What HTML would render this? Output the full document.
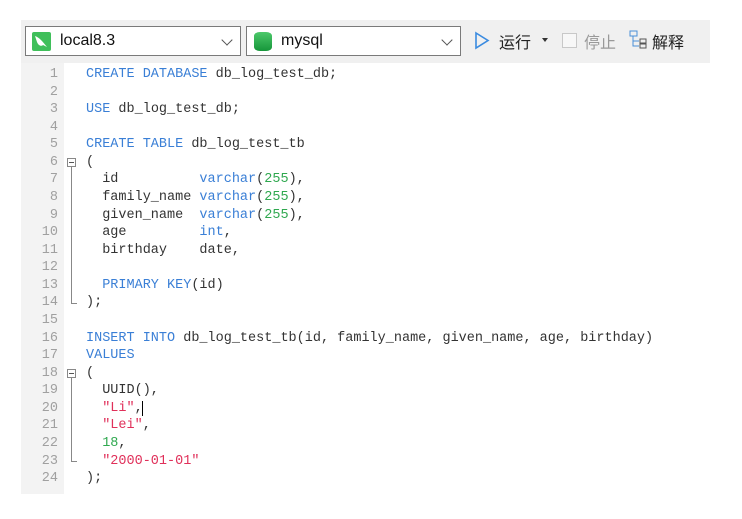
<!DOCTYPE html>
<html><head><meta charset="utf-8"><style>
body{margin:0;width:742px;height:519px;background:#fff;position:relative;overflow:hidden;font-family:"Liberation Sans","Noto Sans CJK SC",sans-serif}
.tb{position:absolute;left:21px;top:20px;width:689px;height:43px;background:#f0f0f0}
.dd{position:absolute;top:6px;height:30px;background:#fff;border:1px solid #7a7a7a;box-sizing:border-box}
.dd span{position:absolute;left:34px;top:5px;font-size:16px;color:#111}
.chev{position:absolute;right:9px;top:9px;width:7px;height:7px;border-right:1.3px solid #555;border-bottom:1.3px solid #555;transform:rotate(45deg)}
.gut{position:absolute;left:21px;top:63px;width:43px;height:431px;background:#f3f3f3}
.code{position:absolute;left:0;top:66px;font-family:"Liberation Mono",monospace;font-size:13.5px;line-height:17.57px;color:#333}
.ln{position:absolute;left:21px;width:37px;text-align:right;color:#a0a0a0;font-size:13.5px;line-height:17.57px}
.tx{position:absolute;left:86px;white-space:pre}
.k{color:#3a7fd6}.n{color:#2fa84f}.s{color:#e0305a}
.fold{position:absolute;left:67px;width:9px;height:9px;border:1px solid #888;background:#fff;box-sizing:border-box}
.fold:after{content:"";position:absolute;left:1px;top:3px;width:5px;height:1px;background:#555}
.vl{position:absolute;left:71px;width:1px;background:#888}
.tk{position:absolute;left:71px;width:6px;height:1px;background:#888}
</style></head><body>
<div class="tb">
 <div class="dd" style="left:4px;width:216px">
  <div style="position:absolute;left:6px;top:5px;width:19px;height:19px;background:#3fbf5a;border-radius:2px"><svg width="19" height="19"><path d="M3 4 C8 6 10 9 15 15 L11 13 C9 15 6 13 5 10 Z" fill="#fff"/></svg></div>
  <span>local8.3</span><div class="chev"></div></div>
 <div class="dd" style="left:225px;width:215px">
  <div style="position:absolute;left:7px;top:5px;width:18px;height:19px;background:linear-gradient(#4cc86a,#16963a);border-radius:6px/4px"></div>
  <span>mysql</span><div class="chev"></div></div>
 <svg style="position:absolute;left:453px;top:11px" width="16" height="19"><path d="M2 2 L14 9.5 L2 17 Z" fill="none" stroke="#3a8be0" stroke-width="1.6"/></svg>
 <span style="position:absolute;left:478px;top:9px;font-size:16px;color:#222">运行</span>
 <div style="position:absolute;left:521px;top:18px;border-left:3px solid transparent;border-right:3px solid transparent;border-top:4px solid #333"></div>
 <div style="position:absolute;left:541px;top:13px;width:13px;height:13px;border:1px solid #c8c8c8;background:#f7f7f7"></div>
 <span style="position:absolute;left:563px;top:9px;font-size:16px;color:#999">停止</span>
 <svg style="position:absolute;left:608px;top:10px" width="20" height="20"><rect x="1" y="1" width="7" height="5" fill="none" stroke="#4a8fd8"/><path d="M4 6 V16 H10 M4 11 H10" fill="none" stroke="#4a8fd8"/><rect x="11" y="9" width="6" height="4" fill="none" stroke="#555"/><rect x="11" y="14" width="6" height="4" fill="none" stroke="#555"/></svg>
 <span style="position:absolute;left:631px;top:9px;font-size:16px;color:#222">解释</span>
</div>
<div class="gut"></div>
<div class="code">
<div class="ln" style="top:0">1</div><div class="tx" style="top:0"><span class="k">CREATE DATABASE</span> db_log_test_db;</div>
<div class="ln" style="top:17.57px">2</div>
<div class="ln" style="top:35.14px">3</div><div class="tx" style="top:35.14px"><span class="k">USE</span> db_log_test_db;</div>
<div class="ln" style="top:52.71px">4</div>
<div class="ln" style="top:70.28px">5</div><div class="tx" style="top:70.28px"><span class="k">CREATE TABLE</span> db_log_test_tb</div>
<div class="ln" style="top:87.85px">6</div><div class="tx" style="top:87.85px">(</div>
<div class="ln" style="top:105.42px">7</div><div class="tx" style="top:105.42px">  id          <span class="k">varchar</span>(<span class="n">255</span>),</div>
<div class="ln" style="top:122.99px">8</div><div class="tx" style="top:122.99px">  family_name <span class="k">varchar</span>(<span class="n">255</span>),</div>
<div class="ln" style="top:140.56px">9</div><div class="tx" style="top:140.56px">  given_name  <span class="k">varchar</span>(<span class="n">255</span>),</div>
<div class="ln" style="top:158.13px">10</div><div class="tx" style="top:158.13px">  age         <span class="k">int</span>,</div>
<div class="ln" style="top:175.7px">11</div><div class="tx" style="top:175.7px">  birthday    date,</div>
<div class="ln" style="top:193.27px">12</div>
<div class="ln" style="top:210.84px">13</div><div class="tx" style="top:210.84px">  <span class="k">PRIMARY KEY</span>(id)</div>
<div class="ln" style="top:228.41px">14</div><div class="tx" style="top:228.41px">);</div>
<div class="ln" style="top:245.98px">15</div>
<div class="ln" style="top:263.55px">16</div><div class="tx" style="top:263.55px"><span class="k">INSERT INTO</span> db_log_test_tb(id, family_name, given_name, age, birthday)</div>
<div class="ln" style="top:281.12px">17</div><div class="tx" style="top:281.12px"><span class="k">VALUES</span></div>
<div class="ln" style="top:298.69px">18</div><div class="tx" style="top:298.69px">(</div>
<div class="ln" style="top:316.26px">19</div><div class="tx" style="top:316.26px">  UUID(),</div>
<div class="ln" style="top:333.83px">20</div><div class="tx" style="top:333.83px">  <span class="s">"Li"</span>,<span style="border-left:1px solid #000;margin-left:-1px"></span></div>
<div class="ln" style="top:351.4px">21</div><div class="tx" style="top:351.4px">  <span class="s">"Lei"</span>,</div>
<div class="ln" style="top:368.97px">22</div><div class="tx" style="top:368.97px">  <span class="n">18</span>,</div>
<div class="ln" style="top:386.54px">23</div><div class="tx" style="top:386.54px">  <span class="s">"2000-01-01"</span></div>
<div class="ln" style="top:404.11px">24</div><div class="tx" style="top:404.11px">);</div>
<div class="fold" style="top:92px"></div><div class="vl" style="top:101px;height:136px"></div><div class="tk" style="top:237px"></div>
<div class="fold" style="top:303px"></div><div class="vl" style="top:312px;height:83px"></div><div class="tk" style="top:395px"></div>
</div>
</body></html>
